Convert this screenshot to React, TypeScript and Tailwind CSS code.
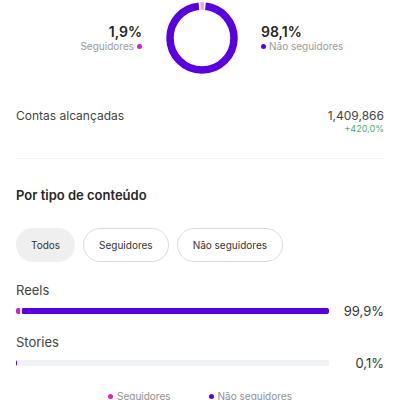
import React from "react";

const PINK = "#d61fc4";
const PURPLE = "#5800e0";

function Donut() {
  const r = 32;
  const c = 2 * Math.PI * r;
  const pink = c * 0.019;
  const gap = 1.6;
  const purple = c - pink - gap * 2;
  return (
    <svg width="72" height="72" viewBox="0 0 72 72" className="shrink-0">
      <g transform="rotate(-90 36 36)">
        <circle
          cx="36"
          cy="36"
          r={r}
          fill="none"
          stroke={PURPLE}
          strokeWidth="7.5"
          strokeDasharray={`${purple} ${c - purple}`}
          strokeDashoffset={-(pink / 2 + gap)}
        />
        <circle
          cx="36"
          cy="36"
          r={r}
          fill="none"
          stroke="#e6a6e0"
          strokeWidth="7.5"
          strokeDasharray={`${pink} ${c - pink}`}
          strokeDashoffset={pink / 2}
        />
      </g>
    </svg>
  );
}

function Dot({ color }: { color: string }) {
  return <span className="inline-block w-[5px] h-[5px] rounded-full" style={{ backgroundColor: color }} />;
}

function Bar({
  label,
  value,
  pinkW,
  purpleW,
  first,
}: {
  label: string;
  value: string;
  pinkW: number;
  purpleW: number;
  first?: boolean;
}) {
  return (
    <div className={first ? "mt-[20px]" : "mt-[15px]"}>
      <div className="text-[13px] text-[#444] leading-4">{label}</div>
      <div className="flex items-center mt-[5px]">
        <div className="w-[313px] h-[6px] bg-[#eff1f6] rounded-[2px] flex gap-[2px] overflow-hidden">
          {pinkW > 0 && <div className="h-full rounded-[1px]" style={{ width: pinkW, backgroundColor: PINK }} />}
          {purpleW > 0 && <div className="h-full rounded-[1px]" style={{ width: purpleW, backgroundColor: PURPLE }} />}
        </div>
        <div className="flex-1 text-right text-[13px] text-[#333] leading-4">{value}</div>
      </div>
    </div>
  );
}

export default function App() {
  return (
    <div className="w-[400px] h-[400px] overflow-hidden bg-white px-4 font-['Inter',sans-serif]">
      <div className="flex items-center justify-center pt-[2px] ml-[8px]">
        <div className="w-[120px] flex flex-col items-end pr-[24px]">
          <div className="text-[14px] font-semibold text-[#262626] leading-[17px]">1,9%</div>
          <div className="flex items-center gap-[3px] text-[10px] text-[#9a9a9a] leading-[13px]">
            Seguidores <Dot color={PINK} />
          </div>
        </div>
        <Donut />
        <div className="w-[124px] flex flex-col items-start pl-[23px]">
          <div className="text-[14px] font-semibold text-[#262626] leading-[17px]">98,1%</div>
          <div className="flex items-center gap-[3px] text-[10px] text-[#9a9a9a] leading-[13px] whitespace-nowrap">
            <Dot color={PURPLE} /> Não seguidores
          </div>
        </div>
      </div>

      <div className="flex justify-between mt-[34px]">
        <div className="text-[12px] text-[#444] leading-[15px]">Contas alcançadas</div>
        <div className="flex flex-col items-end">
          <div className="text-[12px] text-[#444] leading-[15px]">1,409,866</div>
          <div className="text-[9px] text-[#4caf6a] leading-[12px]">+420,0%</div>
        </div>
      </div>

      <div className="h-px bg-[#f2f2f2] mt-[23px]" />

      <div className="text-[13px] font-semibold text-[#262626] mt-[28px] leading-4">Por tipo de conteúdo</div>

      <div className="flex gap-[8px] mt-[25px]">
        <button className="h-[34px] px-[15px] rounded-full bg-[#efefef] text-[10px] text-[#333]">Todos</button>
        <button className="h-[34px] px-[15px] rounded-full border border-[#dbdbdb] text-[10px] text-[#333]">Seguidores</button>
        <button className="h-[34px] px-[15px] rounded-full border border-[#dbdbdb] text-[10px] text-[#333]">Não seguidores</button>
      </div>

      <Bar label="Reels" value="99,9%" pinkW={4} purpleW={307} first />
      <Bar label="Stories" value="0,1%" pinkW={0} purpleW={1} />

      <div className="flex justify-center gap-[38px] mt-[18px] text-[10px] text-[#8e8e8e] leading-[15px]">
        <div className="flex items-center gap-[4px]">
          <Dot color={PINK} /> Seguidores
        </div>
        <div className="flex items-center gap-[4px]">
          <Dot color={PURPLE} /> Não seguidores
        </div>
      </div>
    </div>
  );
}
